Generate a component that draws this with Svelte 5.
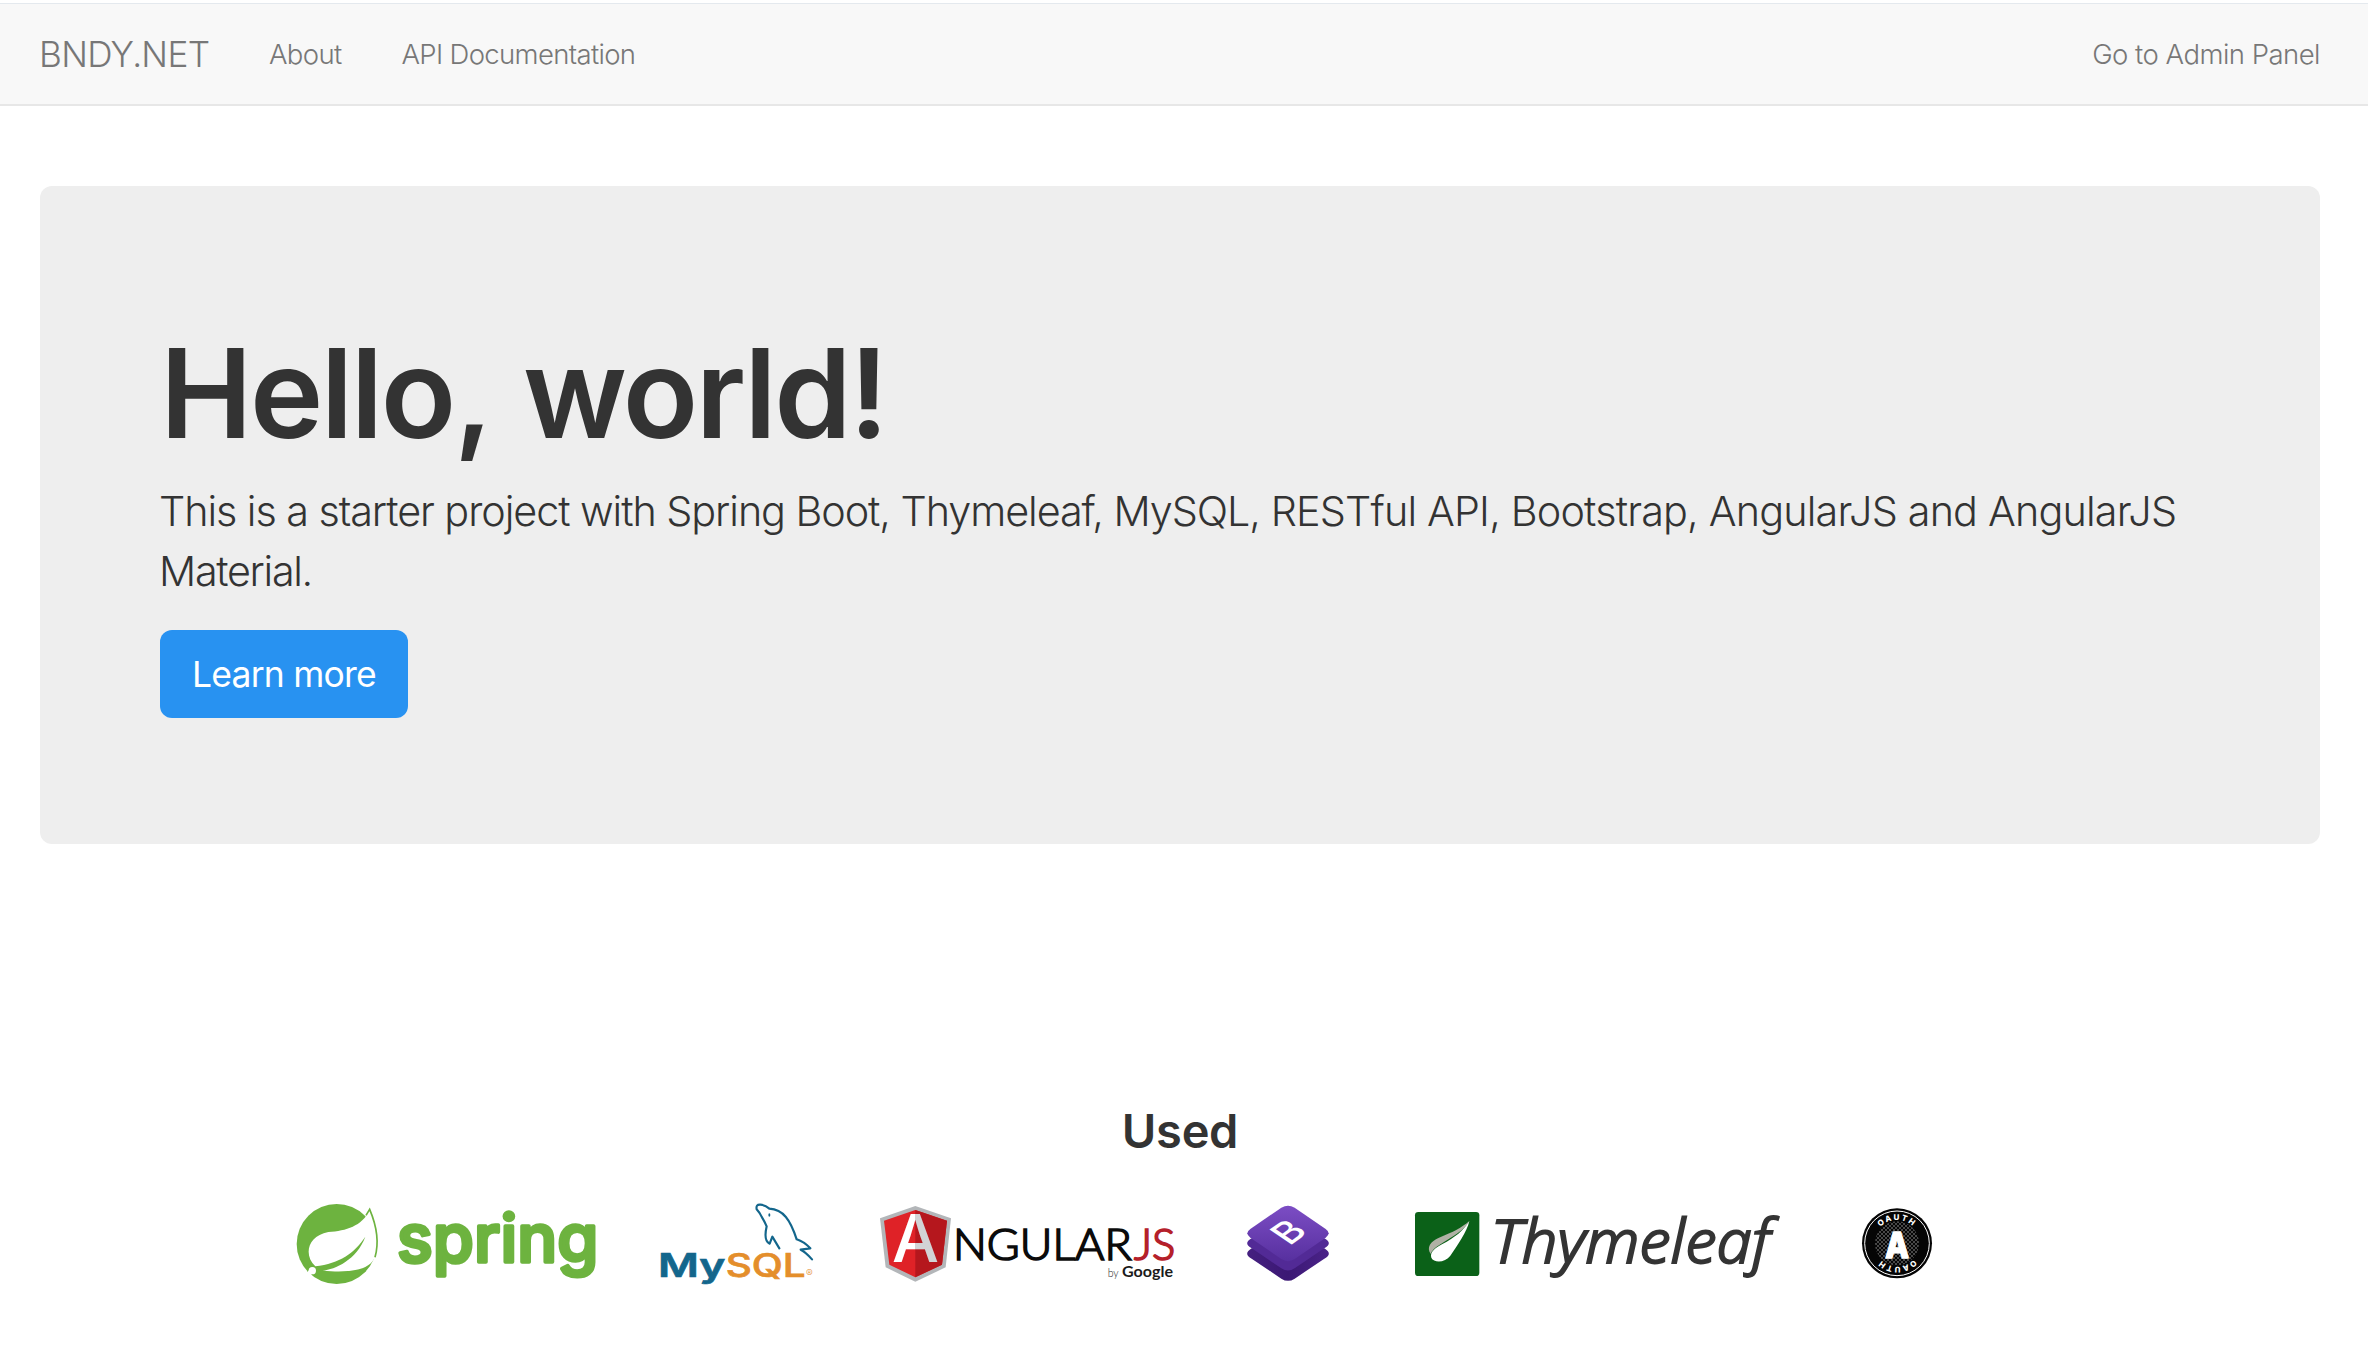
<script>
  const links = ['About', 'API Documentation'];
</script>

<nav class="navbar">
  <a class="brand" href="#home">BNDY.NET</a>
  {#each links as link, i}
    <a class="link" class:docs={i === 1} href="#nav">{link}</a>
  {/each}
  <a class="link admin" href="#admin">Go to Admin Panel</a>
</nav>

<main>
  <section class="jumbotron">
    <h1>Hello, world!</h1>
    <p class="lead">
      <span class="l1"><span class="tight">This is a starter project with Spring Boot, Thymeleaf, MySQL,</span> RESTful API, Bootstrap, AngularJS and AngularJS</span>
      <span class="l2">Material.</span>
    </p>
    <a class="btn" href="#more"><span>Learn more</span></a>
  </section>

  <h3>Used</h3>

  <div class="logos">
    <svg class="spring" viewBox="0 0 1020 360" aria-label="Spring">
      <circle cx="170" cy="192" r="120" fill="#6db33f" />
      <path d="M269 92 C292 140 298 190 286 228 C272 270 215 279 128 272 C165 268 230 240 256 170 C222 220 180 250 106 259 C70 225 82 168 145 156 C200 152 244 138 269 92Z" fill="#fff" />
      <path d="M258 106 L269 88 C291 140 297 190 285 232" fill="none" stroke="#6db33f" stroke-width="5" />
      <circle cx="97" cy="272" r="11" fill="#fff" />
      <path d="M84 270 L97 288 L84 284Z" fill="#fff" />
      <text x="351" y="247" font-family="Inter" font-weight="500" font-size="200" textLength="604" lengthAdjust="spacingAndGlyphs" fill="#6db33f" stroke="#6db33f" stroke-width="11" stroke-linejoin="round">spring</text>
    </svg>

    <svg class="mysql" viewBox="0 0 600 360" aria-label="MySQL">
      <path d="M418 205 L397 170 L389 191 Q370 183 380 139 Q374 125 366 112 Q360 99 350 88 Q347 73 361 74 Q376 75 388 86 C430 88 451 120 470 178 Q492 185 511 205 L482 209 Q497 216 516 238" fill="none" stroke="#13668c" stroke-width="6.5" stroke-linejoin="round" stroke-linecap="round" />
      <ellipse cx="388" cy="105" rx="3" ry="5" fill="#13668c" />
      <text x="54" y="290" font-family="Inter" font-weight="600" font-size="96" textLength="202" lengthAdjust="spacingAndGlyphs" fill="#13668c" stroke="#13668c" stroke-width="2">My</text>
      <text x="257" y="290" font-family="Inter" font-weight="500" font-size="96" textLength="240" lengthAdjust="spacingAndGlyphs" fill="#e48e2b" stroke="#e48e2b" stroke-width="2">SQL</text>
      <text x="498" y="291" font-family="Inter" font-size="30" textLength="24" fill="#e48e2b">®</text>
    </svg>

    <svg class="angular" viewBox="0 0 1020 360" aria-label="AngularJS by Google">
      <defs>
        <linearGradient id="ng-a"><stop offset=".5" stop-color="#fff" /><stop offset=".5" stop-color="#d2d3d5" /></linearGradient>
      </defs>
      <path d="M166 78 L273 115 L257 262 L166 305 L77 262 L60 115Z" fill="#b3b6b9" />
      <path d="M166 90 L261 122 L246 254 L166 292 L88 254 L72 122Z" fill="#df2227" />
      <path d="M166 90 L261 122 L246 254 L166 292Z" fill="#b5171d" />
      <text x="96" y="245" font-family="Inter" font-weight="500" font-size="200" textLength="141" lengthAdjust="spacingAndGlyphs" fill="url(#ng-a)">A</text>
      <text x="279" y="239" font-family="Lato" font-size="127" textLength="536" lengthAdjust="spacingAndGlyphs" fill="#0b0b0b" stroke="#0b0b0b" stroke-width="5">NGULAR</text>
      <text x="822" y="239" font-family="Lato" font-size="127" textLength="124" lengthAdjust="spacingAndGlyphs" fill="#b5202a" stroke="#b5202a" stroke-width="5">JS</text>
      <text x="743" y="292" font-family="Lato" font-size="34" textLength="33" lengthAdjust="spacingAndGlyphs" fill="#222">by</text>
      <text x="786" y="292" font-family="Lato" font-weight="700" font-size="47" textLength="153" lengthAdjust="spacingAndGlyphs" fill="#1b1b1b">Google</text>
    </svg>

    <svg class="bootstrap" viewBox="0 0 420 360" aria-label="Bootstrap">
      <defs>
        <linearGradient id="bs" x1="0" y1="0" x2="0" y2="1"><stop offset="0" stop-color="#7c4dc4" /><stop offset="1" stop-color="#57309f" /></linearGradient>
        <linearGradient id="bs-low" x1="0" y1="0" x2="1" y2="0"><stop offset="0" stop-color="#452080" /><stop offset=".5" stop-color="#3b1874" /><stop offset="1" stop-color="#4b2389" /></linearGradient>
      </defs>
      <path d="M95 205 Q68 222 95 236 L184 296 Q204 309 224 296 L313 236 Q340 222 313 205Z" fill="url(#bs-low)" />
      <path d="M95 175 Q68 190 95 205 L184 265 Q204 278 224 265 L313 205 Q340 190 313 175Z" fill="#522a96" />
      <path d="M184 83 Q204 71 224 83 L317 147 Q335 160 317 173 L224 237 Q204 250 184 237 L91 173 Q73 160 91 147Z" fill="url(#bs)" />
      <text transform="matrix(.82 -.58 .83 .56 208 199)" font-family="Inter" font-weight="500" font-size="110" fill="#fff">B</text>
    </svg>

    <svg class="thyme" viewBox="0 0 1230 360" aria-label="Thymeleaf">
      <rect x="75" y="96" width="193" height="192" rx="10" fill="#0b6118" />
      <path d="M238 123 C222 153 190 167 148 195 Q127 207 122 222 C109 202 121 184 147 173 C190 156 215 143 238 123Z" fill="#b0b1a5" />
      <path d="M238 123 C231 155 202 197 181 227 C166 248 132 250 124 233 C119 217 134 205 156 193 C196 171 220 153 238 123Z" fill="#fff" />
      <text x="302" y="249" font-family="Noto Sans" font-style="italic" font-size="181" textLength="838" lengthAdjust="spacingAndGlyphs" fill="#343434" stroke="#343434" stroke-width="6">Thymeleaf</text>
    </svg>

    <svg class="oauth" viewBox="0 0 360 360" aria-label="OAuth">
      <defs>
        <pattern id="mesh" width="12" height="12" patternUnits="userSpaceOnUse"><path d="M0 0 L12 12 M12 0 L0 12" stroke="#858585" stroke-width="1.6" /></pattern>
        <path id="arc" d="M101 190 A70 70 0 0 1 241 190" />
      </defs>
      <circle cx="171" cy="190" r="105" fill="#050505" />
      <circle cx="171" cy="190" r="97" fill="none" stroke="#fff" stroke-width="3" />
      <circle cx="171" cy="190" r="66" fill="url(#mesh)" />
      <text x="136" y="234" font-family="Inter" font-weight="800" font-size="108" textLength="71" lengthAdjust="spacingAndGlyphs" fill="#fff" stroke="#fff" stroke-width="5" stroke-linejoin="round">A</text>
      <g font-family="Inter" font-weight="800" font-size="24" fill="#fff" text-anchor="middle">
        <text letter-spacing="5"><textPath href="#arc" startOffset="50%">OAUTH</textPath></text>
        <text letter-spacing="5" transform="rotate(180 171 190)"><textPath href="#arc" startOffset="50%">OAUTH</textPath></text>
      </g>
    </svg>
  </div>
</main>

<style>
  :global(body) {
    margin: 0;
    background: #fff;
    color: #333;
    font-family: Inter, 'Liberation Sans', sans-serif;
    font-weight: 300;
  }
  a {
    text-decoration: none;
  }
  .navbar {
    box-sizing: border-box;
    height: 103px;
    margin-top: 3px;
    padding: 0 48px 0 39px;
    display: flex;
    align-items: center;
    background: #f8f8f8;
    border-top: 1px solid #e4e9ee;
    border-bottom: 2px solid #e7e7e7;
    white-space: nowrap;
  }
  .brand,
  .link {
    color: #777;
    line-height: 40px;
  }
  .brand {
    width: 230px;
    font-size: 35.2px;
    letter-spacing: -0.7px;
  }
  .link {
    font-size: 27.5px;
    letter-spacing: -0.66px;
  }
  .docs {
    margin-left: 60px;
  }
  .admin {
    margin-left: auto;
    letter-spacing: -0.52px;
  }
  main {
    padding: 80px 48px 0 40px;
  }
  .jumbotron {
    box-sizing: border-box;
    height: 658px;
    padding: 138px 120px 0;
    background: #eee;
    border-radius: 12px;
  }
  h1 {
    margin: 0;
    font-size: 124px;
    line-height: 138px;
    font-weight: 570;
    letter-spacing: -2.5px;
    word-spacing: 6px;
    white-space: nowrap;
  }
  .lead {
    margin: 19px 0 0 -1px;
    font-size: 41.3px;
    line-height: 60px;
    white-space: nowrap;
  }
  .l1,
  .l2 {
    display: block;
  }
  .l1 {
    letter-spacing: -0.82px;
  }
  .tight {
    letter-spacing: -1.06px;
  }
  .l2 {
    letter-spacing: -1.3px;
  }
  .btn {
    display: flex;
    align-items: center;
    justify-content: center;
    width: 248px;
    height: 88px;
    margin-top: 29px;
    border-radius: 12px;
    background: #2892f1;
    color: #fff;
    font-size: 35.5px;
    font-weight: 400;
    letter-spacing: -0.8px;
    white-space: nowrap;
  }
  h3 {
    margin: 255px 0 0;
    text-align: center;
    font-size: 47px;
    line-height: 64px;
    font-weight: 570;
    letter-spacing: -0.3px;
  }
  .logos {
    display: flex;
    gap: 20px;
    margin: 17px 0 0 240px;
  }
  .logos svg {
    display: block;
    flex: none;
    height: 120px;
  }
  .spring,
  .angular {
    width: 340px;
  }
  .mysql {
    width: 200px;
  }
  .bootstrap {
    width: 140px;
  }
  .thyme {
    width: 410px;
    margin-left: 10px;
  }
  .oauth {
    width: 120px;
    margin-left: 20px;
  }
</style>
